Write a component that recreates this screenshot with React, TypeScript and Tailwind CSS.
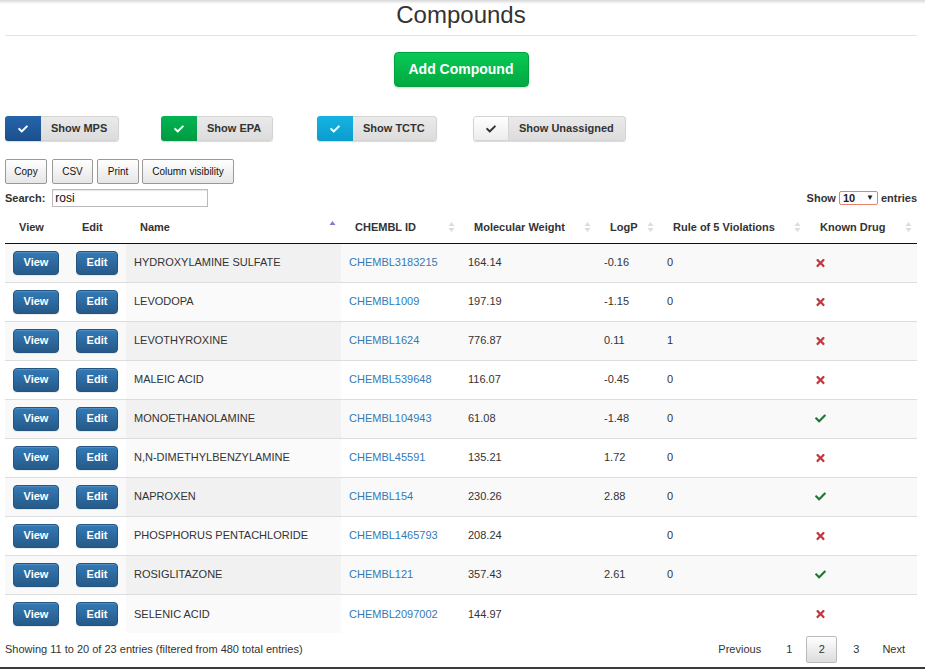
import React from "react";
import { FaCheck, FaTimes } from "react-icons/fa";

type Row = { name: string; id: string; mw: string; logp: string; ro5: string; known: boolean };

const rows: Row[] = [
  { name: "HYDROXYLAMINE SULFATE", id: "CHEMBL3183215", mw: "164.14", logp: "-0.16", ro5: "0", known: false },
  { name: "LEVODOPA", id: "CHEMBL1009", mw: "197.19", logp: "-1.15", ro5: "0", known: false },
  { name: "LEVOTHYROXINE", id: "CHEMBL1624", mw: "776.87", logp: "0.11", ro5: "1", known: false },
  { name: "MALEIC ACID", id: "CHEMBL539648", mw: "116.07", logp: "-0.45", ro5: "0", known: false },
  { name: "MONOETHANOLAMINE", id: "CHEMBL104943", mw: "61.08", logp: "-1.48", ro5: "0", known: true },
  { name: "N,N-DIMETHYLBENZYLAMINE", id: "CHEMBL45591", mw: "135.21", logp: "1.72", ro5: "0", known: false },
  { name: "NAPROXEN", id: "CHEMBL154", mw: "230.26", logp: "2.88", ro5: "0", known: true },
  { name: "PHOSPHORUS PENTACHLORIDE", id: "CHEMBL1465793", mw: "208.24", logp: "", ro5: "0", known: false },
  { name: "ROSIGLITAZONE", id: "CHEMBL121", mw: "357.43", logp: "2.61", ro5: "0", known: true },
  { name: "SELENIC ACID", id: "CHEMBL2097002", mw: "144.97", logp: "", ro5: "", known: false },
];

function SortBoth() {
  return (
    <svg width="7" height="12" viewBox="0 0 7 12" className="absolute right-[5px] top-[9px]">
      <path d="M3.5 1 L6.5 5 L0.5 5 Z" fill="#dcdcdc" />
      <path d="M3.5 11 L6.5 7 L0.5 7 Z" fill="#dcdcdc" />
    </svg>
  );
}

function SortAsc() {
  return (
    <svg width="7" height="12" viewBox="0 0 7 12" className="absolute right-[5px] top-[8px]">
      <path d="M3.5 1 L6.5 5 L0.5 5 Z" fill="#8a78c8" />
    </svg>
  );
}

function Toggle({ label, color, dark }: { label: string; color: string; dark?: boolean }) {
  return (
    <div className="flex h-[25px] rounded-[3px] overflow-hidden shadow-[0_1px_1px_rgba(0,0,0,0.15)]">
      <div className={`w-[36px] flex items-center justify-center ${color}`}>
        <FaCheck className={dark ? "text-[#333] w-[10px] h-[10px]" : "text-white w-[10px] h-[10px]"} />
      </div>
      <div className="flex items-center pl-[10px] pr-[11px] bg-gradient-to-b from-[#eaeaea] to-[#dcdcdc] text-[11px] font-bold text-[#333] border-y border-r border-[#d4d4d4] rounded-r-[3px]">
        {label}
      </div>
    </div>
  );
}

function ExpBtn({ label, cls }: { label: string; cls: string }) {
  return (
    <button className={`h-[25px] ${cls} text-[10px] text-[#111] border border-[#999] rounded-[2px] bg-gradient-to-b from-[#ffffff] to-[#e6e6e6]`}>
      {label}
    </button>
  );
}

function BlueBtn({ label, w }: { label: string; w: string }) {
  return (
    <span
      className={`inline-flex items-center justify-center h-[24px] ${w} rounded-[4px] text-white font-bold text-[11px] border border-[#245580] bg-gradient-to-b from-[#337ab7] to-[#265a88] shadow-[inset_0_1px_0_rgba(255,255,255,0.15),0_1px_1px_rgba(0,0,0,0.075)]`}
    >
      {label}
    </span>
  );
}

export default function App() {
  const th = "relative h-[31px] text-left font-bold text-[11px] text-[#333] pl-[14px] pr-[18px] align-middle";
  return (
    <div className="w-[925px] h-[669px] bg-white relative overflow-hidden" style={{ fontFamily: '"Liberation Sans", Arial, sans-serif' }}>
      <div className="h-[4px] bg-gradient-to-b from-[#d8d8d8] to-white" />
      <div className="px-[5px] w-[922px]">
        <h1 className="text-center text-[24px] leading-[28px] text-[#333] -mt-[4px] pt-[1px]">Compounds</h1>
        <div className="mt-[6px] border-t border-[#e2e2e2]" />
        <div className="flex justify-center mt-[16px]">
          <button className="h-[35px] w-[135px] rounded-[4px] text-white font-bold text-[14px] border border-[#00a33d] bg-gradient-to-b from-[#0bc954] to-[#00a841] shadow-[0_1px_2px_rgba(0,0,0,0.15)]">
            Add Compound
          </button>
        </div>
        <div className="flex mt-[29px] h-[25px]">
          <div className="w-[156px]"><div className="inline-flex"><Toggle label="Show MPS" color="bg-gradient-to-b from-[#2665ab] to-[#1a4f8c]" /></div></div>
          <div className="w-[156px]"><div className="inline-flex"><Toggle label="Show EPA" color="bg-gradient-to-b from-[#04b452] to-[#009a42]" /></div></div>
          <div className="w-[156px]"><div className="inline-flex"><Toggle label="Show TCTC" color="bg-gradient-to-b from-[#16b3e2] to-[#0a9ccc]" /></div></div>
          <div><div className="inline-flex"><Toggle label="Show Unassigned" color="bg-gradient-to-b from-[#ffffff] to-[#ececec] border border-[#d4d4d4] rounded-l-[3px]" dark /></div></div>
        </div>
        <div className="flex mt-[18px]">
          <ExpBtn label="Copy" cls="w-[42px] mr-[5px]" />
          <ExpBtn label="CSV" cls="w-[41px] mr-[4px]" />
          <ExpBtn label="Print" cls="w-[42px] mr-[3px]" />
          <ExpBtn label="Column visibility" cls="w-[92px]" />
        </div>
        <div className="flex items-center justify-between mt-[5px] h-[18px]">
          <div className="flex items-center">
            <span className="text-[11px] font-bold text-[#333]">Search:</span>
            <div className="ml-[7px] w-[156px] h-[18px] border border-[#bbb] shadow-[inset_0_1px_1px_rgba(0,0,0,0.1)] text-[12px] leading-[16px] pl-[2px] text-[#111]">rosi</div>
          </div>
          <div className="flex items-center text-[11px] font-bold text-[#333]">
            <span>Show</span>
            <span className="mx-[3px] h-[14px] w-[39px] border border-[#e8806a] rounded-[2px] flex items-center justify-between px-[3px] text-[11px] text-[#222]">
              <span>10</span>
              <span className="text-[8px]">▼</span>
            </span>
            <span>entries</span>
          </div>
        </div>
        <table className="mt-[5px] w-[912px] border-collapse table-fixed">
          <colgroup>
            <col className="w-[63px]" />
            <col className="w-[58px]" />
            <col className="w-[215px]" />
            <col className="w-[119px]" />
            <col className="w-[136px]" />
            <col className="w-[63px]" />
            <col className="w-[147px]" />
            <col className="w-[111px]" />
          </colgroup>
          <thead>
            <tr className="border-b border-[#111]">
              <th className={th}>View</th>
              <th className={th}>Edit</th>
              <th className={th}>Name<SortAsc /></th>
              <th className={th}>CHEMBL ID<SortBoth /></th>
              <th className={th}>Molecular Weight<SortBoth /></th>
              <th className={th}>LogP<SortBoth /></th>
              <th className={th}>Rule of 5 Violations<SortBoth /></th>
              <th className={th}>Known Drug<SortBoth /></th>
            </tr>
          </thead>
          <tbody>
            {rows.map((r, i) => {
              const odd = i % 2 === 0;
              const bg = odd ? "bg-[#f9f9f9]" : "bg-white";
              const sbg = odd ? "bg-[#f1f1f1]" : "bg-[#fafafa]";
              const td = "h-[39px] pl-[8px] align-middle text-[11px]";
              return (
                <tr key={r.id} className={`${bg} ${i > 0 ? "border-t border-[#ddd]" : ""}`}>
                  <td className={td}><BlueBtn label="View" w="w-[46px]" /></td>
                  <td className={td}><BlueBtn label="Edit" w="w-[42px]" /></td>
                  <td className={`${td} text-[#333] ${sbg}`}>{r.name}</td>
                  <td className={`${td} text-[#337ab7]`}>{r.id}</td>
                  <td className={`${td} text-[#333]`}>{r.mw}</td>
                  <td className={`${td} text-[#333]`}>{r.logp}</td>
                  <td className={`${td} text-[#333]`}>{r.ro5}</td>
                  <td className={`${td} pl-[9px]`}>
                    {r.known ? (
                      <FaCheck className="text-[#1d7a35] w-[11px] h-[11px]" />
                    ) : (
                      <FaTimes className="text-[#c0393f] w-[11px] h-[12px]" />
                    )}
                  </td>
                </tr>
              );
            })}
          </tbody>
        </table>
        <div className="flex items-center justify-between mt-[3px] h-[27px]">
          <span className="text-[11px] text-[#333]">Showing 11 to 20 of 23 entries (filtered from 480 total entries)</span>
          <div className="flex items-center text-[11px] text-[#333]">
            <span className="mr-[25px]">Previous</span>
            <span className="mr-[14px]">1</span>
            <span className="w-[31px] h-[27px] mr-[16px] flex items-center justify-center border border-[#bbb] rounded-[2px] bg-gradient-to-b from-white to-[#dcdcdc]">2</span>
            <span className="mr-[23px]">3</span>
            <span className="mr-[12px]">Next</span>
          </div>
        </div>
      </div>
      <div className="absolute left-0 right-0 bottom-0 h-[2px] bg-[#3a3a3a]" />
    </div>
  );
}
